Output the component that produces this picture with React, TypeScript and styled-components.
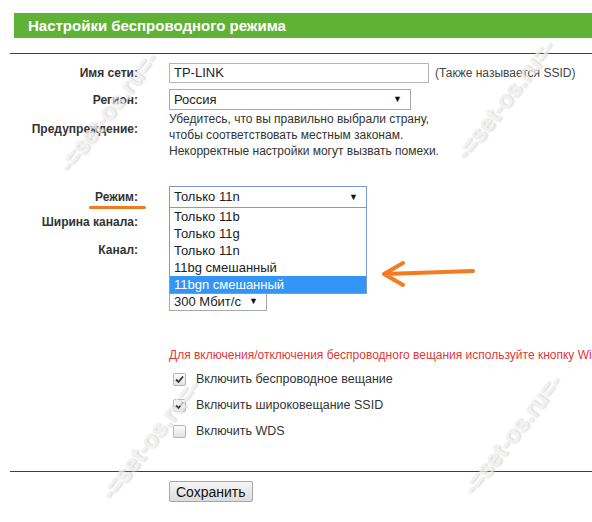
import styled, { createGlobalStyle } from 'styled-components';

const GlobalStyle = createGlobalStyle`
  body {
    margin: 0;
    background: #fff;
    font-family: "Liberation Sans", Arial, sans-serif;
    overflow: hidden;
  }
`;

const modes = ['Только 11b', 'Только 11g', 'Только 11n', '11bg смешанный', '11bgn смешанный'];

const watermarks = [
  { x: 108, y: 112 },
  { x: 505, y: 100 },
  { x: 150, y: 440 },
  { x: 512, y: 435 },
];

function Arrow() {
  return (
    <ArrowSvg width="100" height="30" viewBox="0 0 100 30">
      <path
        d="M96 12 L8 15 M26 4 L7 15 L26 26"
        fill="none"
        stroke="#f27c1f"
        strokeWidth="4"
        strokeLinecap="round"
        strokeLinejoin="round"
      />
    </ArrowSvg>
  );
}

function Check({ checked }: { checked: boolean }) {
  return (
    <Box>
      {checked && (
        <svg width="9" height="9" viewBox="0 0 9 9">
          <path d="M1 4.5 L3.5 7 L8 1.5" fill="none" stroke="#333" strokeWidth="1.8" />
        </svg>
      )}
    </Box>
  );
}

function App() {
  return (
    <>
      <GlobalStyle />
      <Page>
        <Header>Настройки беспроводного режима</Header>
        <Divider />
        <Form>
          <Row $top={9}>
            <Label>Имя сети:</Label>
            <Field>
              <TextInput>TP-LINK</TextInput>
              <Hint>(Также называется SSID)</Hint>
            </Field>
          </Row>
          <Row $top={6}>
            <Label>Регион:</Label>
            <Field>
              <Select $width={242} $height={21}>
                Россия
                <Caret>▼</Caret>
              </Select>
            </Field>
          </Row>
          <Row $top={0} $start>
            <Label $pad={12}>Предупреждение:</Label>
            <Note>
              Убедитесь, что вы правильно выбрали страну,
              <br />
              чтобы соответствовать местным законам.
              <br />
              Некорректные настройки могут вызвать помехи.
            </Note>
          </Row>
          <Row $top={27}>
            <Label>
              <Marked>Режим:</Marked>
            </Label>
            <Field>
              <SelectWrap>
                <Select $width={198} $height={22} $focused>
                  Только 11n
                  <Caret>▼</Caret>
                </Select>
                <OptionList>
                  {modes.map((m, i) => (
                    <Option key={m} $active={i === modes.length - 1}>
                      {m}
                    </Option>
                  ))}
                </OptionList>
                <ArrowSpot>
                  <Arrow />
                </ArrowSpot>
              </SelectWrap>
            </Field>
          </Row>
          <Row $top={3}>
            <Label>Ширина канала:</Label>
            <Field>
              <Select $width={98} $height={22} />
            </Field>
          </Row>
          <Row $top={6}>
            <Label>Канал:</Label>
            <Field>
              <Select $width={98} $height={22} />
            </Field>
          </Row>
          <Row $top={31}>
            <Label />
            <Field>
              <Select $width={98} $height={19}>
                300 Мбит/с
                <Caret>▼</Caret>
              </Select>
            </Field>
          </Row>
          <Row $top={37}>
            <Label />
            <Warning>
              Для включения/отключения беспроводного вещания используйте кнопку Wi-Fi
            </Warning>
          </Row>
          <Row $top={9}>
            <Label />
            <CheckRow>
              <Check checked />
              Включить беспроводное вещание
            </CheckRow>
          </Row>
          <Row $top={10}>
            <Label />
            <CheckRow>
              <Check checked />
              Включить широковещание SSID
            </CheckRow>
          </Row>
          <Row $top={10}>
            <Label />
            <CheckRow>
              <Check checked={false} />
              Включить WDS
            </CheckRow>
          </Row>
        </Form>
        <Divider $top={32} />
        <Actions>
          <Button type="button">Сохранить</Button>
        </Actions>
        {watermarks.map((w) => (
          <Watermark key={`${w.x}-${w.y}`} $x={w.x} $y={w.y}>
            -=set-os.ru=-
          </Watermark>
        ))}
      </Page>
    </>
  );
}

export default App;

const Page = styled.div`
  position: relative;
  height: 522px;
  padding-top: 13px;
  box-sizing: border-box;
  overflow: hidden;
`;

const Header = styled.div`
  margin-left: 14px;
  height: 25px;
  line-height: 25px;
  padding-left: 14px;
  background: #60b236;
  color: #fff;
  font-size: 15px;
  font-weight: 700;
`;

const Divider = styled.div<{ $top?: number }>`
  margin-top: ${(p) => p.$top ?? 15}px;
  margin-left: 10px;
  border-top: 1px solid #2c4a3c;
`;

const Form = styled.div`
  display: flex;
  flex-direction: column;
`;

const Row = styled.div<{ $top: number; $start?: boolean }>`
  display: grid;
  grid-template-columns: 138px 1fr;
  column-gap: 31px;
  align-items: ${(p) => (p.$start ? 'start' : 'center')};
  margin-top: ${(p) => p.$top}px;
`;

const Label = styled.div<{ $pad?: number }>`
  text-align: right;
  font-size: 12px;
  font-weight: 700;
  color: #333;
  padding-top: ${(p) => p.$pad ?? 0}px;
  white-space: nowrap;
`;

const Marked = styled.span`
  position: relative;

  &::after {
    content: '';
    position: absolute;
    left: -6px;
    right: -8px;
    bottom: -5px;
    height: 3px;
    border-radius: 2px;
    background: #f07a1e;
  }
`;

const Field = styled.div`
  display: flex;
  align-items: center;
`;

const TextInput = styled.div`
  width: 260px;
  height: 20px;
  box-sizing: border-box;
  border: 1px solid #b4b4b4;
  padding: 0 4px;
  font-size: 13px;
  line-height: 18px;
  color: #222;
`;

const Hint = styled.span`
  margin-left: 6px;
  font-size: 12px;
  color: #444;
`;

const Select = styled.div<{ $width: number; $height: number; $focused?: boolean }>`
  position: relative;
  width: ${(p) => p.$width}px;
  height: ${(p) => p.$height}px;
  box-sizing: border-box;
  border: 1px solid ${(p) => (p.$focused ? '#7b9ccf' : '#a9a9a9')};
  background: #fff;
  padding: 0 4px;
  font-size: 13px;
  line-height: ${(p) => p.$height - 2}px;
  color: #222;
`;

const Caret = styled.span`
  position: absolute;
  right: 8px;
  top: 0;
  font-size: 9px;
  color: #111;
`;

const SelectWrap = styled.div`
  position: relative;
`;

const OptionList = styled.div`
  position: absolute;
  top: 22px;
  left: 0;
  z-index: 2;
  width: 198px;
  box-sizing: border-box;
  border: 1px solid #7b9ccf;
  border-top: none;
  background: #fff;
`;

const Option = styled.div<{ $active?: boolean }>`
  height: 17px;
  line-height: 17px;
  padding: 0 4px;
  font-size: 13px;
  color: ${(p) => (p.$active ? '#fff' : '#222')};
  background: ${(p) => (p.$active ? '#3395f5' : 'transparent')};
`;

const ArrowSpot = styled.div`
  position: absolute;
  left: 208px;
  top: 73px;
  z-index: 2;
`;

const ArrowSvg = styled.svg`
  display: block;
`;

const Note = styled.div`
  font-size: 12px;
  line-height: 16px;
  color: #333;
  padding-top: 1px;
`;

const Warning = styled.div`
  font-size: 12px;
  line-height: 14px;
  color: #e0383a;
  white-space: nowrap;
`;

const CheckRow = styled.div`
  display: flex;
  align-items: center;
  gap: 10px;
  height: 16px;
  padding-left: 4px;
  font-size: 12.5px;
  color: #333;
`;

const Box = styled.span`
  display: flex;
  align-items: center;
  justify-content: center;
  width: 13px;
  height: 13px;
  box-sizing: border-box;
  border: 1px solid #b5b5b5;
  border-radius: 2px;
  background: linear-gradient(#fdfdfd, #e2e2e2);
`;

const Actions = styled.div`
  display: flex;
  margin-top: 9px;
  padding-left: 169px;
`;

const Button = styled.button`
  height: 21px;
  padding: 0 6px;
  border: 1px solid #a6a6a6;
  border-radius: 2px;
  background: linear-gradient(#f6f6f6, #dcdcdc);
  font-family: "Liberation Sans", Arial, sans-serif;
  font-size: 14px;
  color: #111;
`;

const Watermark = styled.div<{ $x: number; $y: number }>`
  position: absolute;
  left: ${(p) => p.$x}px;
  top: ${(p) => p.$y}px;
  transform: translate(-50%, -50%) rotate(-52deg);
  font-size: 24px;
  font-weight: 700;
  color: #ededed;
  text-shadow: 1px 1px 2px #c4c4c4;
  white-space: nowrap;
  pointer-events: none;
  z-index: 3;
  opacity: 0.75;
`;
